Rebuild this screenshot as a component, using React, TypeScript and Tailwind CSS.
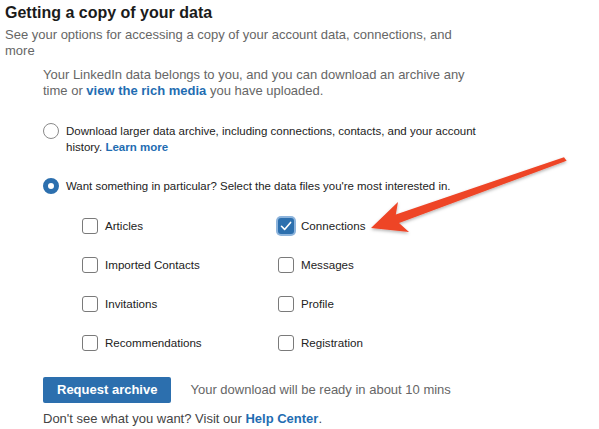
import { useState } from 'react'

type Item = { id: string; label: string }

const items: Item[] = [
  { id: 'articles', label: 'Articles' },
  { id: 'connections', label: 'Connections' },
  { id: 'imported', label: 'Imported Contacts' },
  { id: 'messages', label: 'Messages' },
  { id: 'invitations', label: 'Invitations' },
  { id: 'profile', label: 'Profile' },
  { id: 'recommendations', label: 'Recommendations' },
  { id: 'registration', label: 'Registration' },
]

function Radio({ checked }: { checked: boolean }) {
  return checked ? (
    <span className="block w-4 h-4 shrink-0 rounded-full border-[5px] border-[#2c6fae] bg-white" />
  ) : (
    <span className="block w-4 h-4 shrink-0 rounded-full border border-[#8a8a8a] bg-white" />
  )
}

function Checkbox({ checked }: { checked: boolean }) {
  if (!checked) {
    return <span className="block w-4 h-4 shrink-0 rounded-[3px] border border-[#7a7a7a] bg-white" />
  }
  return (
    <span className="w-4 h-4 shrink-0 rounded-[3px] bg-[#2c6fae] ring-2 ring-[#8db4dc] flex items-center justify-center">
      <svg viewBox="0 0 16 16" className="w-4 h-4">
        <path d="M3.5 8.3 L6.6 11.4 L12.6 4.4" fill="none" stroke="white" strokeWidth="1.6" strokeLinecap="round" strokeLinejoin="round" />
      </svg>
    </span>
  )
}

export default function App() {
  const [mode, setMode] = useState<'all' | 'some'>('some')
  const [picked, setPicked] = useState<Record<string, boolean>>({ connections: true })

  return (
    <div className="relative w-[599px] h-[429px] overflow-hidden bg-white font-['Liberation_Sans',Arial,sans-serif]">
      <h1 className="pl-[5px] pt-[3px] text-[16px] leading-[20px] font-bold text-[#1b1b1b]">
        Getting a copy of your data
      </h1>
      <p className="pl-[5px] mt-[4px] w-[470px] text-[13px] leading-[16px] text-[#666]">
        See your options for accessing a copy of your account data, connections, and more
      </p>

      <div className="pl-[43px]">
        <p className="mt-[8px] w-[440px] text-[13px] leading-[16px] text-[#666]">
          Your LinkedIn data belongs to you, and you can download an archive any time or{' '}
          <a className="font-bold text-[#1f6db2]">view the rich media</a> you have uploaded.
        </p>

        <button
          type="button"
          onClick={() => setMode('all')}
          className="mt-[24px] flex items-start gap-[7px] text-left"
        >
          <Radio checked={mode === 'all'} />
          <span className="w-[440px] text-[11.5px] leading-[16px] text-[#222]">
            Download larger data archive, including connections, contacts, and your account history.{' '}
            <span className="font-bold text-[#1f6db2]">Learn more</span>
          </span>
        </button>

        <button
          type="button"
          onClick={() => setMode('some')}
          className="mt-[23px] flex items-center gap-[7px] text-left"
        >
          <Radio checked={mode === 'some'} />
          <span className="text-[11.45px] leading-[16px] text-[#222]">
            Want something in particular? Select the data files you're most interested in.
          </span>
        </button>

        <div className="mt-[22px] ml-[39px] grid grid-cols-[196px_196px] gap-y-[19px]">
          {items.map((it) => (
            <button
              key={it.id}
              type="button"
              onClick={() => setPicked((p) => ({ ...p, [it.id]: !p[it.id] }))}
              className="flex items-center gap-[7px] h-[20px] text-left"
            >
              <Checkbox checked={!!picked[it.id]} />
              <span className="text-[11.6px] text-[#222]">{it.label}</span>
            </button>
          ))}
        </div>

        <div className="mt-[24px] flex items-center gap-[19px]">
          <button
            type="button"
            className="h-[26px] px-[14px] rounded-[2px] bg-[#2c6fae] text-white text-[13px] font-bold"
          >
            Request archive
          </button>
          <span className="text-[13px] text-[#666]">Your download will be ready in about 10 mins</span>
        </div>

        <p className="mt-[8px] text-[13px] leading-[16px] text-[#444]">
          Don't see what you want? Visit our <a className="font-bold text-[#1f6db2]">Help Center</a>.
        </p>
      </div>

      <svg className="absolute inset-0 pointer-events-none" width="599" height="429" viewBox="0 0 599 429">
        <defs>
          <filter id="sh" x="-10%" y="-10%" width="120%" height="130%">
            <feDropShadow dx="0" dy="1.5" stdDeviation="1.5" floodColor="#000" floodOpacity="0.3" />
          </filter>
        </defs>
        <polygon
          filter="url(#sh)"
          fill="#ee4427"
          points="564,157.2 566.6,160.8 399,223 409,232 371,228 398,202 395.8,214.4"
        />
      </svg>
    </div>
  )
}
